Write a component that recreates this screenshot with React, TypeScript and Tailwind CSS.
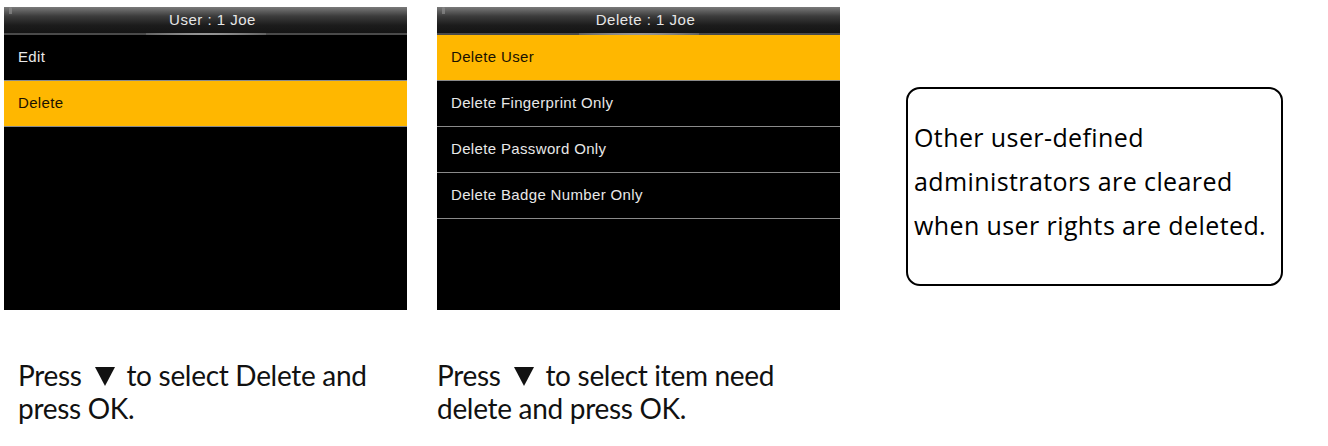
import React from "react";

type Item = { label: string; active?: boolean };

const Screen = ({ title, items }: { title: string; items: Item[] }) => {
  return (
    <div className="w-[403px] h-[303px] bg-black flex flex-col overflow-hidden">
      {/* Header */}
      <div className="relative h-[28px] shrink-0 bg-[linear-gradient(to_bottom,#7a7a7a_0%,#3c3c3c_35%,#1c1c1c_70%,#141414_100%)] border-b-2 border-[#4a4a4a] flex items-center justify-center pl-[14px]">
        <div className="absolute left-[5px] top-0 w-[3px] h-[7px] bg-[#8a8a8a] rounded-t-full opacity-70" />
        <div className="absolute left-1/2 -translate-x-1/2 bottom-[-2px] w-[120px] h-[2px] bg-[radial-gradient(ellipse_at_center,#bdbdbd_0%,#4a4a4a_100%)]" />
        <span
          className="text-[15px] text-[#e6e6e6] tracking-[0.5px]"
          style={{ fontFamily: '"Liberation Sans", Arial, sans-serif' }}
        >
          {title}
        </span>
      </div>

      {/* Menu rows */}
      {items.map((item) => (
        <div
          key={item.label}
          className={`h-[46px] shrink-0 flex items-center pl-[14px] border-b border-[#8a8a8a] ${
            item.active ? "bg-[#ffb700] text-[#1a1200]" : "bg-black text-[#e8e8e8]"
          }`}
        >
          <span
            className="text-[15px] tracking-[0.35px]"
            style={{ fontFamily: '"Liberation Sans", Arial, sans-serif' }}
          >
            {item.label}
          </span>
        </div>
      ))}
    </div>
  );
};

const Arrow = () => (
  <svg
    width="20"
    height="19"
    viewBox="0 0 20 19"
    className="inline-block align-baseline ml-[6px] mr-[5px]"
  >
    <path d="M0 0 L20 0 L10 19 Z" fill="#111" />
  </svg>
);

const Caption = ({ children }: { children: React.ReactNode }) => (
  <p
    className="text-[28px] leading-[33px] text-[#111] tracking-[-0.3px]"
    style={{ fontFamily: 'Lato, "Open Sans", sans-serif' }}
  >
    {children}
  </p>
);

export default function App() {
  return (
    <div className="w-[1328px] h-[446px] bg-white relative overflow-hidden">
      <div className="flex pt-[7px] pl-[4px]">
        {/* Column 1 */}
        <div className="flex flex-col w-[403px]">
          <Screen
            title="User : 1 Joe"
            items={[{ label: "Edit" }, { label: "Delete", active: true }]}
          />
          <div className="pt-[49px] pl-[14px] whitespace-nowrap">
            <Caption>
              Press <Arrow /> to select Delete and
              <br />
              press OK.
            </Caption>
          </div>
        </div>

        {/* Column 2 */}
        <div className="flex flex-col w-[403px] ml-[30px]">
          <Screen
            title="Delete : 1 Joe"
            items={[
              { label: "Delete User", active: true },
              { label: "Delete Fingerprint Only" },
              { label: "Delete Password Only" },
              { label: "Delete Badge Number Only" },
            ]}
          />
          <div className="pt-[49px] whitespace-nowrap">
            <Caption>
              Press <Arrow /> to select item need
              <br />
              delete and press OK.
            </Caption>
          </div>
        </div>

        {/* Note box */}
        <div className="ml-[66px] mt-[80px] w-[377px] h-[199px] border-2 border-black rounded-[14px] pl-[6px] pt-[26px] shrink-0">
          <p
            className="text-[25px] leading-[44px] text-black tracking-[0.4px] whitespace-nowrap"
            style={{ fontFamily: '"Open Sans", "Noto Sans", sans-serif' }}
          >
            Other user-defined
            <br />
            administrators are cleared
            <br />
            when user rights are deleted.
          </p>
        </div>
      </div>
    </div>
  );
}
